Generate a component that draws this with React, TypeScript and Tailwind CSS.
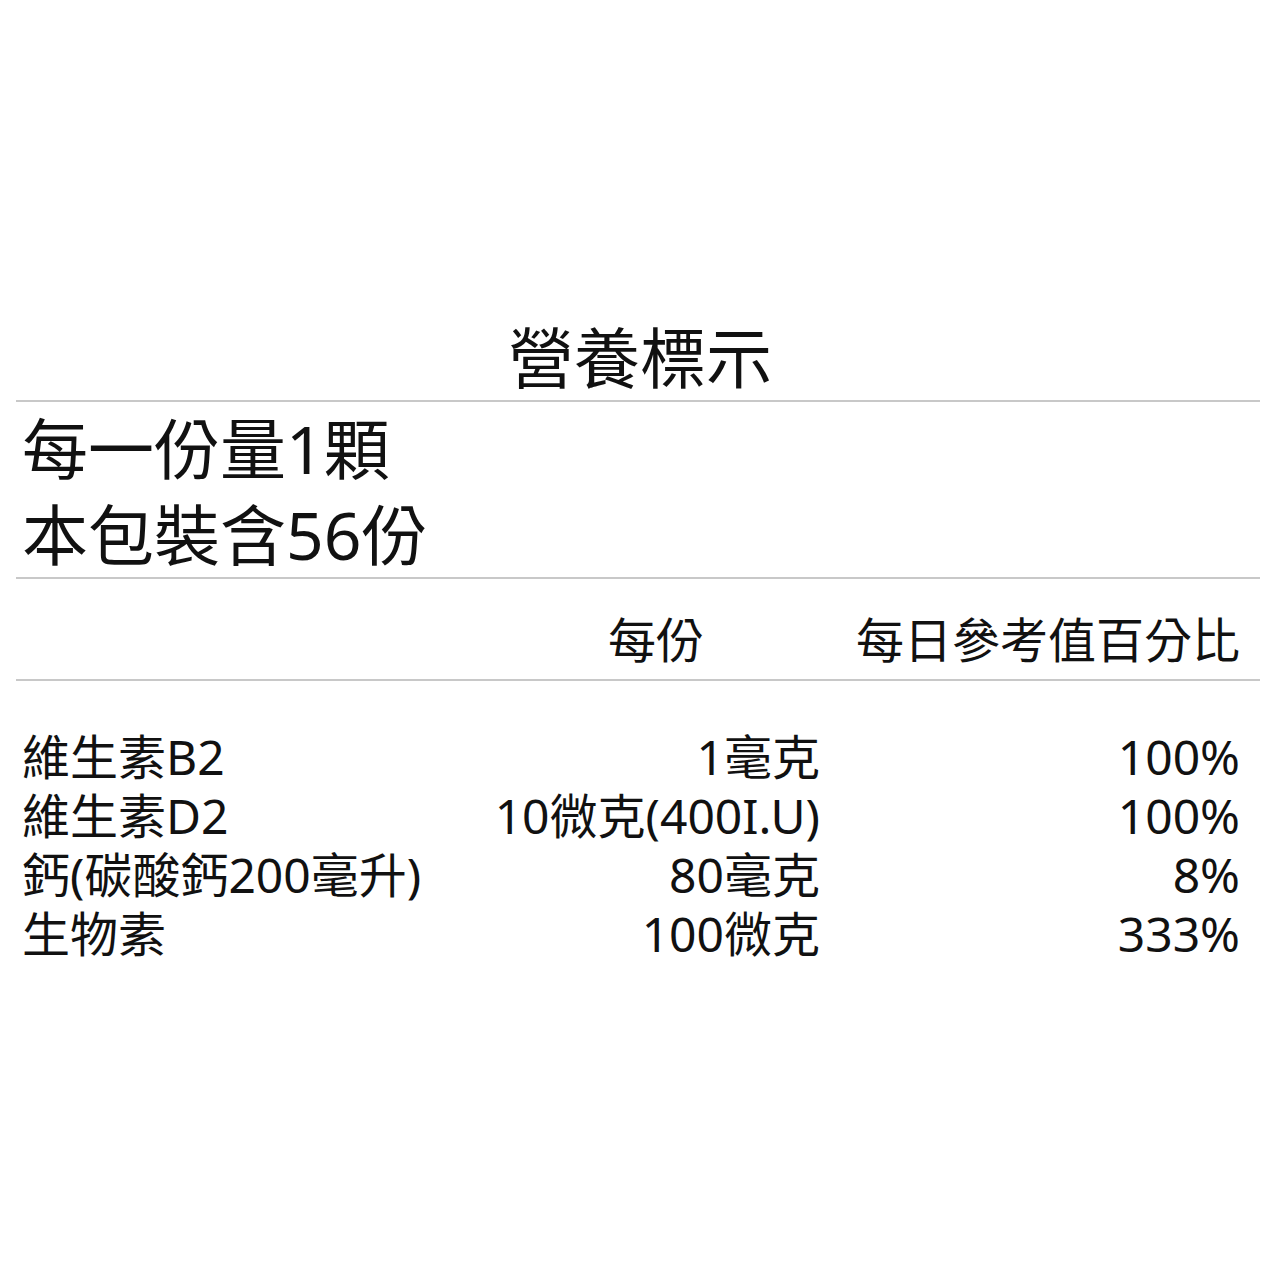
const FONT = "font-['Noto_Sans','Noto_Sans_CJK_TC',sans-serif]";

const ROWS = [
  { name: "維生素B2", amount: "1毫克", pct: "100%" },
  { name: "維生素D2", amount: "10微克(400I.U)", pct: "100%" },
  { name: "鈣(碳酸鈣200毫升)", amount: "80毫克", pct: "8%" },
  { name: "生物素", amount: "100微克", pct: "333%" },
];

function Rule() {
  return <div className="h-[2px] bg-[#c8c8c8] ml-[16px]" />;
}

export default function App() {
  return (
    <div className={`w-[1280px] h-[1280px] bg-white text-[#111] ${FONT}`}>
      <div className="pt-[314px] pr-[20px]">
        <h1 className="text-center text-[66px] leading-[86px] pl-[20px] font-normal">營養標示</h1>
        <Rule />
        <div className="pl-[22px] pt-[3px] text-[66px] leading-[86px]">
          <div>每一份量1顆</div>
          <div>本包裝含56份</div>
        </div>
        <Rule />
        <div className="grid grid-cols-[1fr_400px_420px] pl-[22px] pr-[20px] pt-[31px] pb-[9px] text-[48px] leading-[60px] whitespace-nowrap">
          <div />
          <div className="text-left pl-[188px]">每份</div>
          <div className="text-right">每日參考值百分比</div>
        </div>
        <Rule />
        <div className="grid grid-cols-[auto_1fr_420px] pl-[22px] pr-[20px] pt-[46px] text-[48px] leading-[59px] whitespace-nowrap">
          {ROWS.map((r) => (
            <div key={r.name} className="contents">
              <div>{r.name}</div>
              <div className="text-right">{r.amount}</div>
              <div className="text-right">{r.pct}</div>
            </div>
          ))}
        </div>
      </div>
    </div>
  );
}
